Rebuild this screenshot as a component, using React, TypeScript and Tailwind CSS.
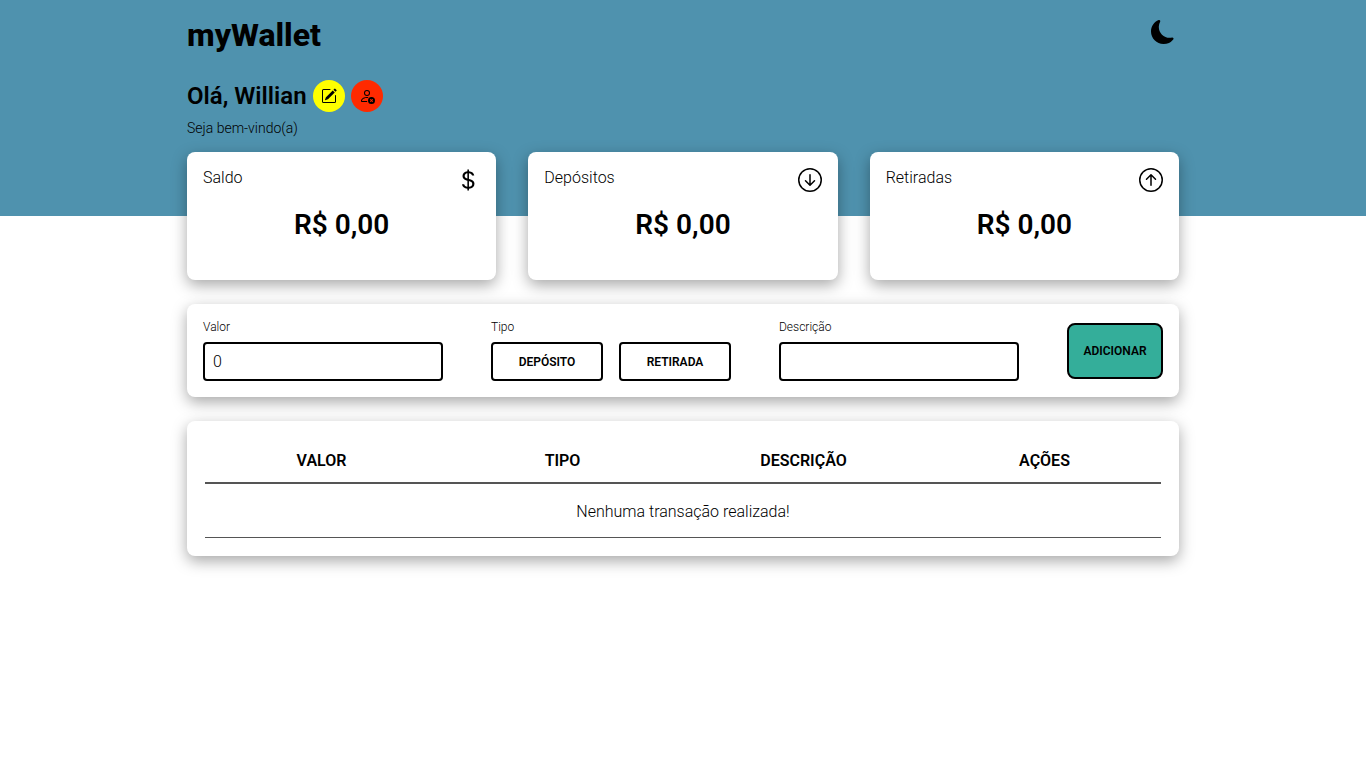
import { useState, type ReactNode } from "react";
import {
  BsArrowDownCircle,
  BsArrowUpCircle,
  BsCurrencyDollar,
  BsMoonFill,
  BsPencilSquare,
  BsPersonX,
} from "react-icons/bs";

const panel = "rounded-lg bg-white p-4 shadow-[0_5px_15px_rgba(0,0,0,0.35)]";
const field =
  "h-[39px] w-full rounded-sm border-2 border-black bg-white px-2 text-base font-light outline-none";
const label = "mb-2 block text-xs leading-[14px] font-light";

function SummaryCard({ title, icon }: { title: string; icon: ReactNode }) {
  return (
    <section className={`${panel} h-32`}>
      <div className="flex h-10 items-start justify-between">
        <h3 className="text-base leading-5 font-light">{title}</h3>
        <span className="text-2xl">{icon}</span>
      </div>
      <p className="text-center text-[28px] leading-[34px] font-semibold">R$ 0,00</p>
    </section>
  );
}

export default function App() {
  const [value, setValue] = useState("0");
  const [description, setDescription] = useState("");

  return (
    <div className="min-h-screen bg-white font-['Roboto',sans-serif] text-black">
      <header className="bg-[#4f92ae] pb-20">
        <div className="mx-auto max-w-5xl px-4 pt-4">
          <div className="flex h-10 items-start justify-between">
            <h1 className="text-[32px] leading-[38px] font-extrabold">myWallet</h1>
            <button type="button" aria-label="Alternar tema" className="p-1 text-2xl">
              <BsMoonFill />
            </button>
          </div>
          <div className="mt-6 flex h-8 items-center gap-1.5">
            <h2 className="text-2xl font-semibold">Olá, Willian</h2>
            <button
              type="button"
              aria-label="Editar nome"
              className="flex size-8 items-center justify-center rounded-full bg-[#ffff00]"
            >
              <BsPencilSquare />
            </button>
            <button
              type="button"
              aria-label="Remover usuário"
              className="flex size-8 items-center justify-center rounded-full bg-[#ff2a00]"
            >
              <BsPersonX />
            </button>
          </div>
          <p className="mt-2 text-sm leading-4 font-light">Seja bem-vindo(a)</p>
        </div>
      </header>

      <main className="mx-auto -mt-16 flex max-w-5xl flex-col gap-6 px-4">
        <div className="grid grid-cols-3 gap-8">
          <SummaryCard title="Saldo" icon={<BsCurrencyDollar />} />
          <SummaryCard title="Depósitos" icon={<BsArrowDownCircle />} />
          <SummaryCard title="Retiradas" icon={<BsArrowUpCircle />} />
        </div>

        <form
          className={`${panel} flex items-center justify-between gap-12`}
          onSubmit={(e) => e.preventDefault()}
        >
          <div className="flex-1">
            <label htmlFor="valor" className={label}>Valor</label>
            <input
              id="valor"
              className={field}
              value={value}
              onChange={(e) => setValue(e.target.value)}
            />
          </div>
          <div className="flex-1" role="group" aria-labelledby="tipo">
            <span id="tipo" className={label}>Tipo</span>
            <div className="grid grid-cols-2 gap-4">
              <button type="button" className="h-[39px] rounded-sm border-2 border-black text-xs font-semibold">
                DEPÓSITO
              </button>
              <button type="button" className="h-[39px] rounded-sm border-2 border-black text-xs font-semibold">
                RETIRADA
              </button>
            </div>
          </div>
          <div className="flex-1">
            <label htmlFor="descricao" className={label}>Descrição</label>
            <input
              id="descricao"
              className={field}
              value={description}
              onChange={(e) => setDescription(e.target.value)}
            />
          </div>
          <button
            type="submit"
            className="h-14 w-24 rounded-lg border-2 border-black bg-[#34ae9a] text-xs font-semibold"
          >
            ADICIONAR
          </button>
        </form>

        <section className={`${panel} px-[18px] pb-[18px]`}>
          <table className="w-full table-fixed border-collapse">
            <thead>
              <tr className="h-[46px] border-b-2 border-[#555555]">
                <th className="pt-0.5 pr-1.5 font-semibold">VALOR</th>
                <th className="pt-0.5 pr-0.5 font-semibold">TIPO</th>
                <th className="pt-0.5 pl-0.5 font-semibold">DESCRIÇÃO</th>
                <th className="pt-0.5 pl-1.5 font-semibold">AÇÕES</th>
              </tr>
            </thead>
            <tbody>
              <tr className="h-[54px] border-b border-[#555555]">
                <td colSpan={4} className="pt-1 text-center font-light">
                  Nenhuma transação realizada!
                </td>
              </tr>
            </tbody>
          </table>
        </section>
      </main>
    </div>
  );
}
